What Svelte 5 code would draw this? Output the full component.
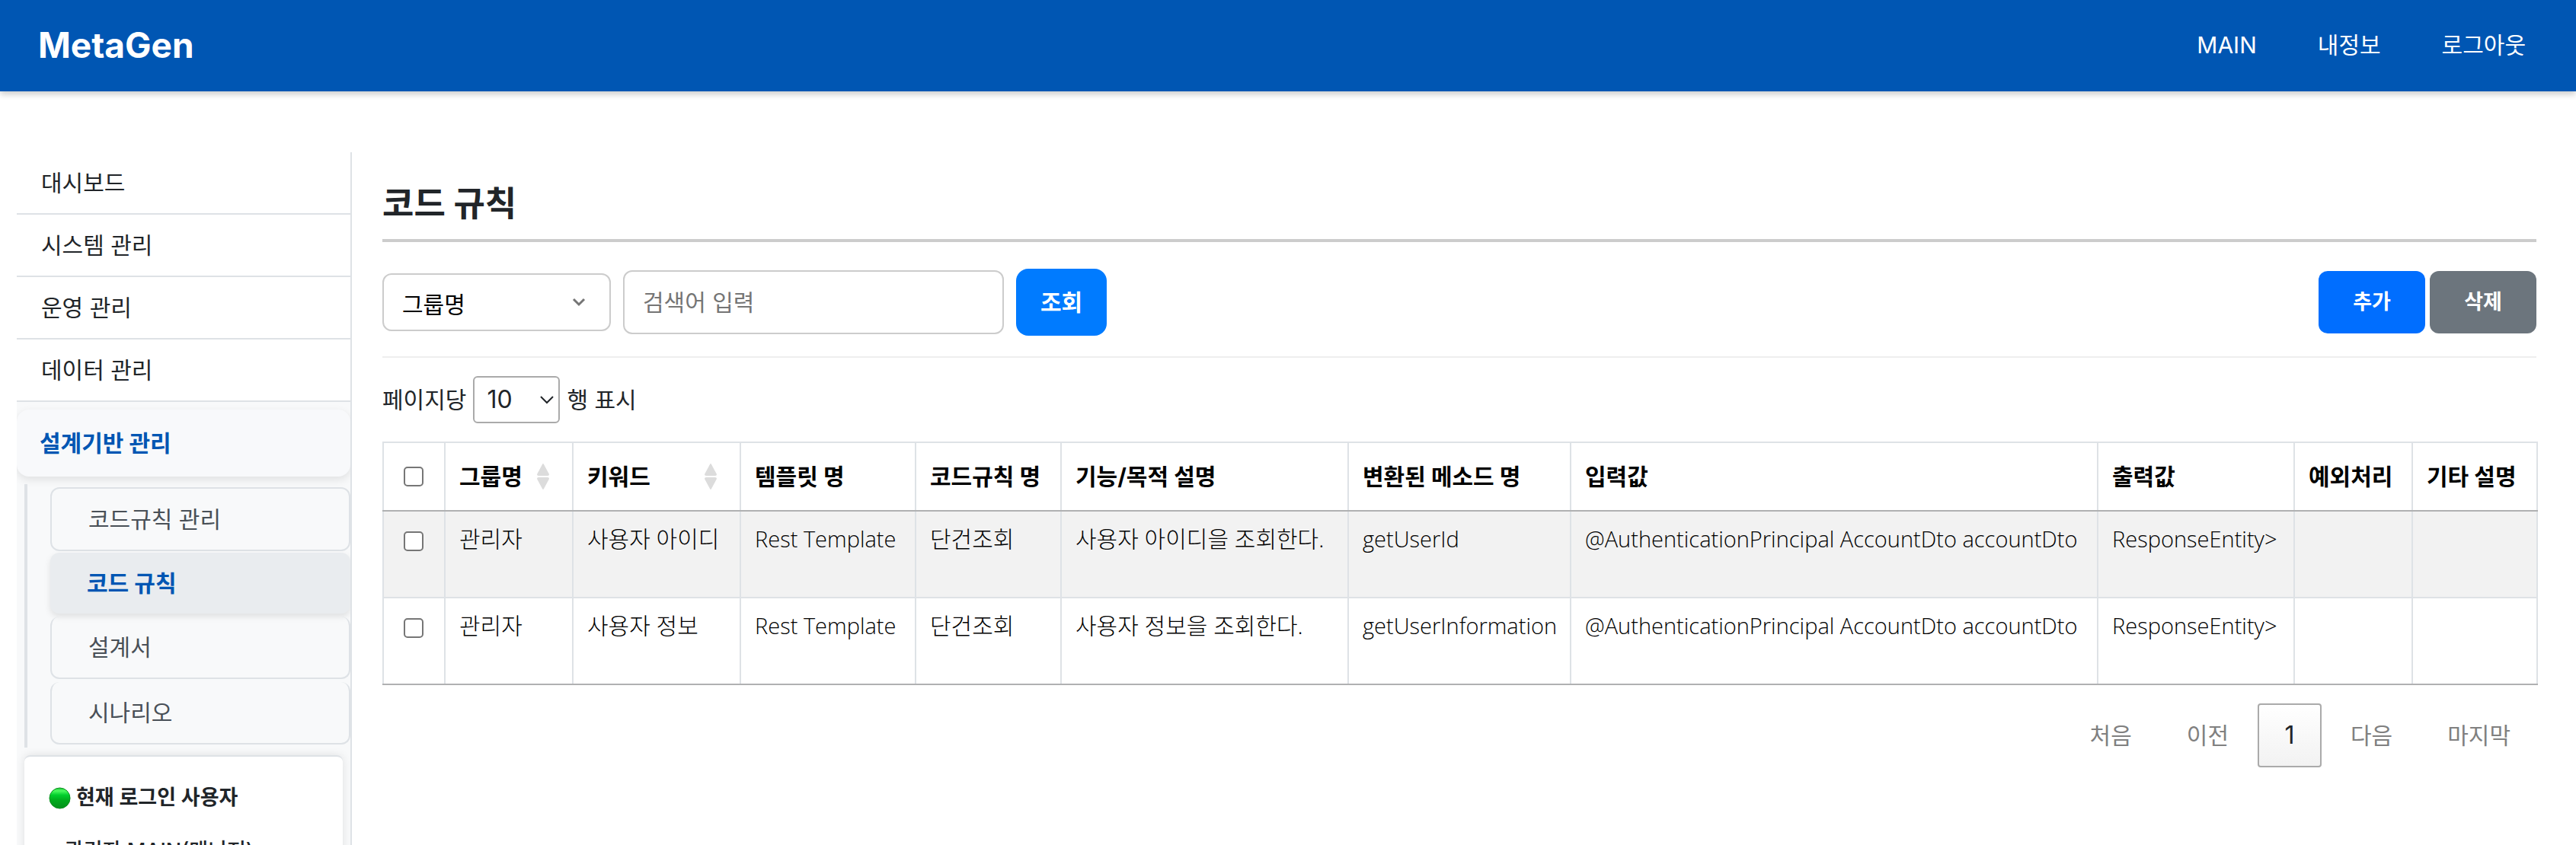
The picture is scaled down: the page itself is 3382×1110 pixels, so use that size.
<script>
  const nav = ['MAIN', '내정보', '로그아웃'];
  const menu = ['대시보드', '시스템 관리', '운영 관리', '데이터 관리'];
  const submenu = ['코드규칙 관리', '코드 규칙', '설계서', '시나리오'];
  const current = '코드 규칙';

  const columns = [
    { label: '그룹명', cls: 'c-group', sortable: true },
    { label: '키워드', cls: 'c-keyword', sortable: true },
    { label: '템플릿 명', cls: 'c-template', code: true },
    { label: '코드규칙 명', cls: 'c-rule' },
    { label: '기능/목적 설명', cls: 'c-purpose' },
    { label: '변환된 메소드 명', cls: 'c-method', code: true },
    { label: '입력값', cls: 'c-input', code: true },
    { label: '출력값', cls: 'c-output', code: true },
    { label: '예외처리', cls: 'c-error' },
    { label: '기타 설명', cls: 'c-etc' }
  ];
  const rows = [
    ['관리자', '사용자 아이디', 'Rest Template', '단건조회', '사용자 아이디을 조회한다.', 'getUserId', '@AuthenticationPrincipal AccountDto accountDto', 'ResponseEntity>', '', ''],
    ['관리자', '사용자 정보', 'Rest Template', '단건조회', '사용자 정보을 조회한다.', 'getUserInformation', '@AuthenticationPrincipal AccountDto accountDto', 'ResponseEntity>', '', '']
  ];

  let checked = $state([false, false]);
  const allChecked = $derived(checked.every(Boolean));
  function toggleAll(e) {
    const on = e.currentTarget.checked;
    checked = checked.map(() => on);
  }
</script>

<header class="topbar">
  <a class="brand" href="#main">MetaGen</a>
  <nav class="topnav" aria-label="상단 메뉴">
    {#each nav as item}
      <a href="#{item}">{item}</a>
    {/each}
  </nav>
</header>

<div class="page">
  <aside class="side">
    <ul class="menu">
      {#each menu as item}
        <li><a href="#{item}">{item}</a></li>
      {/each}
    </ul>
    <div class="open">
      <a class="section" href="#design">설계기반 관리</a>
      <ul class="sub">
        {#each submenu as item}
          <li><a class:active={item === current} href="#{item}">{item}</a></li>
        {/each}
      </ul>
      <section class="users">
        <h2>
          <svg class="dot" viewBox="0 0 30 30" aria-hidden="true">
            <defs>
              <linearGradient id="dotFill" x1="0" y1="0" x2="0" y2="1">
                <stop offset="0" stop-color="#1fc437" />
                <stop offset="0.14" stop-color="#4dfb5f" />
                <stop offset="0.35" stop-color="#00cf2c" />
                <stop offset="0.6" stop-color="#00ab1c" />
                <stop offset="1" stop-color="#03901a" />
              </linearGradient>
            </defs>
            <circle cx="15" cy="15" r="14" fill="url(#dotFill)" stroke="#078f1d" />
          </svg>
          현재 로그인 사용자
        </h2>
        <p>관리자 MAIN(매니저)</p>
      </section>
    </div>
  </aside>

  <main class="content">
    <h1>코드 규칙</h1>

    <form class="toolbar" onsubmit={(e) => e.preventDefault()}>
      <div class="picker">
        <select class="field" aria-label="검색 조건">
          <option>그룹명</option>
          <option>키워드</option>
        </select>
        <svg class="chev" viewBox="0 0 18 12" aria-hidden="true"><path d="M2 2l7 7 7-7" /></svg>
      </div>
      <input class="query" type="text" placeholder="검색어 입력" aria-label="검색어" />
      <button class="search" type="submit">조회</button>
      <div class="actions">
        <button class="add" type="button">추가</button>
        <button class="del" type="button">삭제</button>
      </div>
    </form>

    <div class="length">
      <label for="len">페이지당</label>
      <div class="picker">
        <select id="len">
          <option>10</option>
          <option>25</option>
        </select>
        <svg class="chev" viewBox="0 0 18 12" aria-hidden="true"><path d="M1 2l8 8 8-8" /></svg>
      </div>
      <span>행 표시</span>
    </div>

    <table>
      <colgroup>
        <col class="c-check" />
        {#each columns as c}<col class={c.cls} />{/each}
      </colgroup>
      <thead>
        <tr>
          <th class="check"><input type="checkbox" aria-label="전체 선택" checked={allChecked} onchange={toggleAll} /></th>
          {#each columns as c}
            <th scope="col">
              <div class="head">
                {c.label}
                {#if c.sortable}
                  <svg class="sort" viewBox="0 0 18 34" aria-hidden="true">
                    <path d="M8 1Q9 -1 10 1L17 14Q17 16 15 16H3Q1 16 1 14ZM8 33Q9 35 10 33L17 20Q17 18 15 18H3Q1 18 1 20Z" />
                  </svg>
                {/if}
              </div>
            </th>
          {/each}
        </tr>
      </thead>
      <tbody>
        {#each rows as row, i}
          <tr>
            <td class="check"><input type="checkbox" aria-label="{row[1]} 선택" bind:checked={checked[i]} /></td>
            {#each row as cell, j}<td class:code={columns[j].code}>{cell}</td>{/each}
          </tr>
        {/each}
      </tbody>
    </table>

    <nav class="pager" aria-label="페이지">
      <button type="button">처음</button>
      <button type="button">이전</button>
      <button type="button" class="now" aria-current="page">1</button>
      <button type="button">다음</button>
      <button type="button">마지막</button>
    </nav>
  </main>
</div>

<style>
  :global(body) {
    background: #fff;
    color: #212529;
    font-family: Inter, 'Noto Sans CJK KR', sans-serif;
    font-size: 30px;
    line-height: 48px;
  }
  .topbar, .page, .page :global(*) { box-sizing: border-box; }
  a { color: inherit; text-decoration: none; }
  ul { list-style: none; margin: 0; padding: 0; }
  button, select, input { font: inherit; margin: 0; }
  button { border: 0; cursor: pointer; }

  .topbar {
    display: flex;
    align-items: center;
    justify-content: space-between;
    height: 120px;
    padding: 0 66px 2px 50px;
    background: #0056b3;
    color: #fff;
    box-shadow: 0 4px 8px rgba(0, 0, 0, 0.2);
  }
  .brand { font-size: 46px; font-weight: 700; }
  .topnav { display: flex; gap: 80px; font-weight: 400; }

  .page { display: flex; align-items: flex-start; padding-top: 80px; }

  .side {
    flex: none;
    width: 440px;
    height: calc(100vh - 200px);
    margin-left: 22px;
    border-right: 2px solid #dee2e6;
    overflow: hidden;
  }
  .menu a {
    display: block;
    padding: 16px 32px;
    border-bottom: 2px solid #dee2e6;
  }
  .open { background: #f8f9fa; padding-top: 10px; }
  .section {
    display: block;
    padding: 20px 30px;
    border-radius: 16px;
    background: #f8f9fb;
    color: #0056b3;
    font-weight: 700;
    box-shadow: 0 4px 12px rgba(0, 0, 0, 0.1);
  }
  .sub {
    display: flex;
    flex-direction: column;
    gap: 4px;
    margin: 10px 0 10px 10px;
    padding: 4px 0 4px 30px;
    border-left: 4px solid #dee2e6;
  }
  .sub a {
    display: block;
    padding: 16px 48px;
    border: 2px solid #dee2e6;
    border-top-width: 0;
    border-radius: 12px;
    color: #495057;
  }
  .sub li:first-child a { border-top-width: 2px; }
  .sub a.active {
    margin-top: -2px;
    border-width: 0;
    background: #e9ecef;
    color: #0056b3;
    font-weight: 700;
    box-shadow: 0 4px 8px rgba(0, 0, 0, 0.1);
  }
  .users {
    margin: 0 10px;
    padding: 30px 32px;
    border-top: 2px solid #dee2e6;
    border-radius: 8px;
    background: #fff;
    box-shadow: 0 0 12px rgba(0, 0, 0, 0.1);
  }
  .users h2 {
    display: flex;
    align-items: center;
    gap: 7px;
    margin: 0;
    font-size: 27px;
    line-height: 48px;
    font-weight: 600;
  }
  .dot { width: 29px; height: 29px; }
  .users p { margin: 22px 0 0 21px; font-size: 27px; font-weight: 500; }

  .content { flex: 1; min-width: 0; padding: 36px 52px 0 40px; }
  h1 {
    margin: 0;
    padding-bottom: 14px;
    border-bottom: 4px solid #ccc;
    font-size: 45px;
    line-height: 64px;
    font-weight: 700;
  }

  .toolbar {
    display: flex;
    align-items: center;
    gap: 16px;
    padding: 35px 0 27px;
    border-bottom: 2px solid #eee;
  }
  .picker { display: grid; align-items: center; }
  .picker > :global(*) { grid-area: 1 / 1; }
  .chev {
    justify-self: end;
    width: 18px;
    height: 12px;
    fill: none;
    stroke: #757575;
    stroke-width: 3;
    pointer-events: none;
  }
  select { appearance: none; background: #fff; }
  .field {
    width: 300px;
    height: 76px;
    padding: 6px 24px 0;
    border: 2px solid #ccc;
    border-radius: 12px;
    color: #000;
  }
  .toolbar .chev { margin-right: 33px; }
  .query {
    width: 500px;
    height: 84px;
    padding: 0 24px;
    border: 2px solid #ccc;
    border-radius: 12px;
  }
  .query::placeholder { color: #757575; }
  .search {
    width: 119px;
    height: 88px;
    padding: 0;
    border-radius: 16px;
    background: #007bff;
    color: #fff;
    font-weight: 600;
  }
  .actions { display: flex; gap: 6px; margin-left: auto; }
  .actions button {
    width: 140px;
    height: 82px;
    border-radius: 12px;
    color: #fff;
    font-size: 27px;
    font-weight: 600;
  }
  .actions .add { background: #006eff; }
  .actions .del { background: #6c757d; }

  .length { display: flex; align-items: center; gap: 9px; margin: 24px 0; }
  .length select {
    width: 114px;
    height: 62px;
    padding: 0 16px;
    border: 2px solid #aaa;
    border-radius: 6px;
    color: #212529;
    font-size: 32px;
  }
  .length .chev { margin-right: 8px; stroke: #212529; stroke-width: 2; }

  table {
    width: 100%;
    table-layout: fixed;
    border-collapse: collapse;
    color: #000;
  }
  th, td {
    border: 2px solid #dee2e6;
    padding: 12px 18px;
    text-align: left;
    white-space: nowrap;
  }
  th { height: 90px; padding: 0 18px; border-bottom-color: #b0b1b2; font-weight: 700; }
  td { height: 114px; vertical-align: top; font-family: 'Open Sans', 'Noto Sans CJK KR', sans-serif; font-weight: 300; }
  td.code { font-size: 29px; }
  tbody tr:first-child { background: #f2f2f2; }
  tbody tr:last-child td { border-bottom-color: #b0b1b2; }
  .head { display: flex; align-items: center; justify-content: space-between; }
  .sort { width: 18px; height: 34px; margin-right: 11px; fill: #dcdcdc; }
  .check { padding-left: 26px; padding-right: 0; }
  input[type='checkbox'] {
    display: block;
    appearance: none;
    width: 26px;
    height: 26px;
    border: 2px solid #767676;
    border-radius: 5px;
    background: #fff;
  }
  td input[type='checkbox'] { margin-top: 14px; }
  input[type='checkbox']:checked { background: #0056b3; }

  .c-check { width: 81px; }
  .c-group { width: 168px; }
  .c-keyword { width: 220px; }
  .c-template { width: 230px; }
  .c-rule { width: 191px; }
  .c-purpose { width: 377px; }
  .c-method { width: 292px; }
  .c-input { width: 692px; }
  .c-output { width: 258px; }
  .c-error { width: 155px; }
  .c-etc { width: 164px; }

  .pager { display: flex; justify-content: flex-end; gap: 4px; padding-top: 24px; }
  .pager button {
    height: 84px;
    padding: 0 32px;
    border: 2px solid transparent;
    border-radius: 4px;
    background: none;
    color: #808080;
  }
  .pager .now {
    min-width: 84px;
    border-color: #aaa;
    background: linear-gradient(#fff, #f2f2f2);
    color: #212529;
    font-size: 32px;
  }
</style>
